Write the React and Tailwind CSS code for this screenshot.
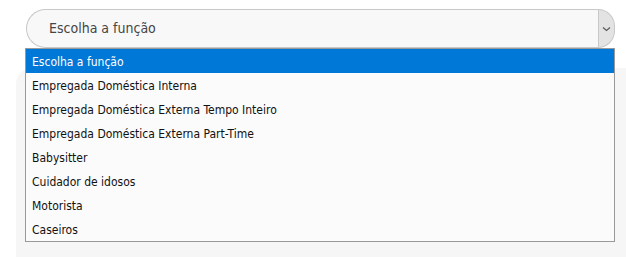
import React from "react";

const options = [
  "Escolha a função",
  "Empregada Doméstica Interna",
  "Empregada Doméstica Externa Tempo Inteiro",
  "Empregada Doméstica Externa Part-Time",
  "Babysitter",
  "Cuidador de idosos",
  "Motorista",
  "Caseiros",
];

export default function App() {
  return (
    <div className="relative w-[626px] h-[257px] bg-white overflow-hidden">
      <div className="pt-[9px] pl-[26px]">
        <div className="flex w-[589px] h-[39px]">
          <div className="flex-1 flex items-center bg-[#f8f8f8] border border-r-0 border-[#c8c8c8] rounded-l-[20px] pl-[22px]">
            <span
              className="text-[14px] text-[#454545]"
              style={{ fontFamily: '"DejaVu Sans Condensed", "DejaVu Sans", sans-serif' }}
            >
              Escolha a função
            </span>
          </div>
          <div className="w-[17px] flex items-center justify-center bg-[#e3e3e3] border border-[#c8c8c8] rounded-r-[20px]">
            <svg width="9" height="6" viewBox="0 0 9 6" className="mr-[1px]">
              <path d="M1 1.5 L4.5 4.5 L8 1.5" fill="none" stroke="#555" strokeWidth="1.1" />
            </svg>
          </div>
        </div>
      </div>
      <div className="ml-[16px] mt-[20px] w-[640px] h-[200px] bg-[#f6f6f6] rounded-tl-[16px]" />
      <div
        className="absolute left-[25px] top-[48px] w-[590px] border border-[#999] bg-[#fbfbfb]"
        style={{ fontFamily: '"DejaVu Sans Condensed", "DejaVu Sans", sans-serif' }}
      >
        {options.map((o, i) => (
          <div
            key={o}
            className={
              "h-[24px] flex items-center pl-[6px] pt-[2px] text-[12px] " +
              (i === 0 ? "bg-[#0078d7] text-white" : "text-[#111]")
            }
          >
            {o}
          </div>
        ))}
      </div>
    </div>
  );
}
